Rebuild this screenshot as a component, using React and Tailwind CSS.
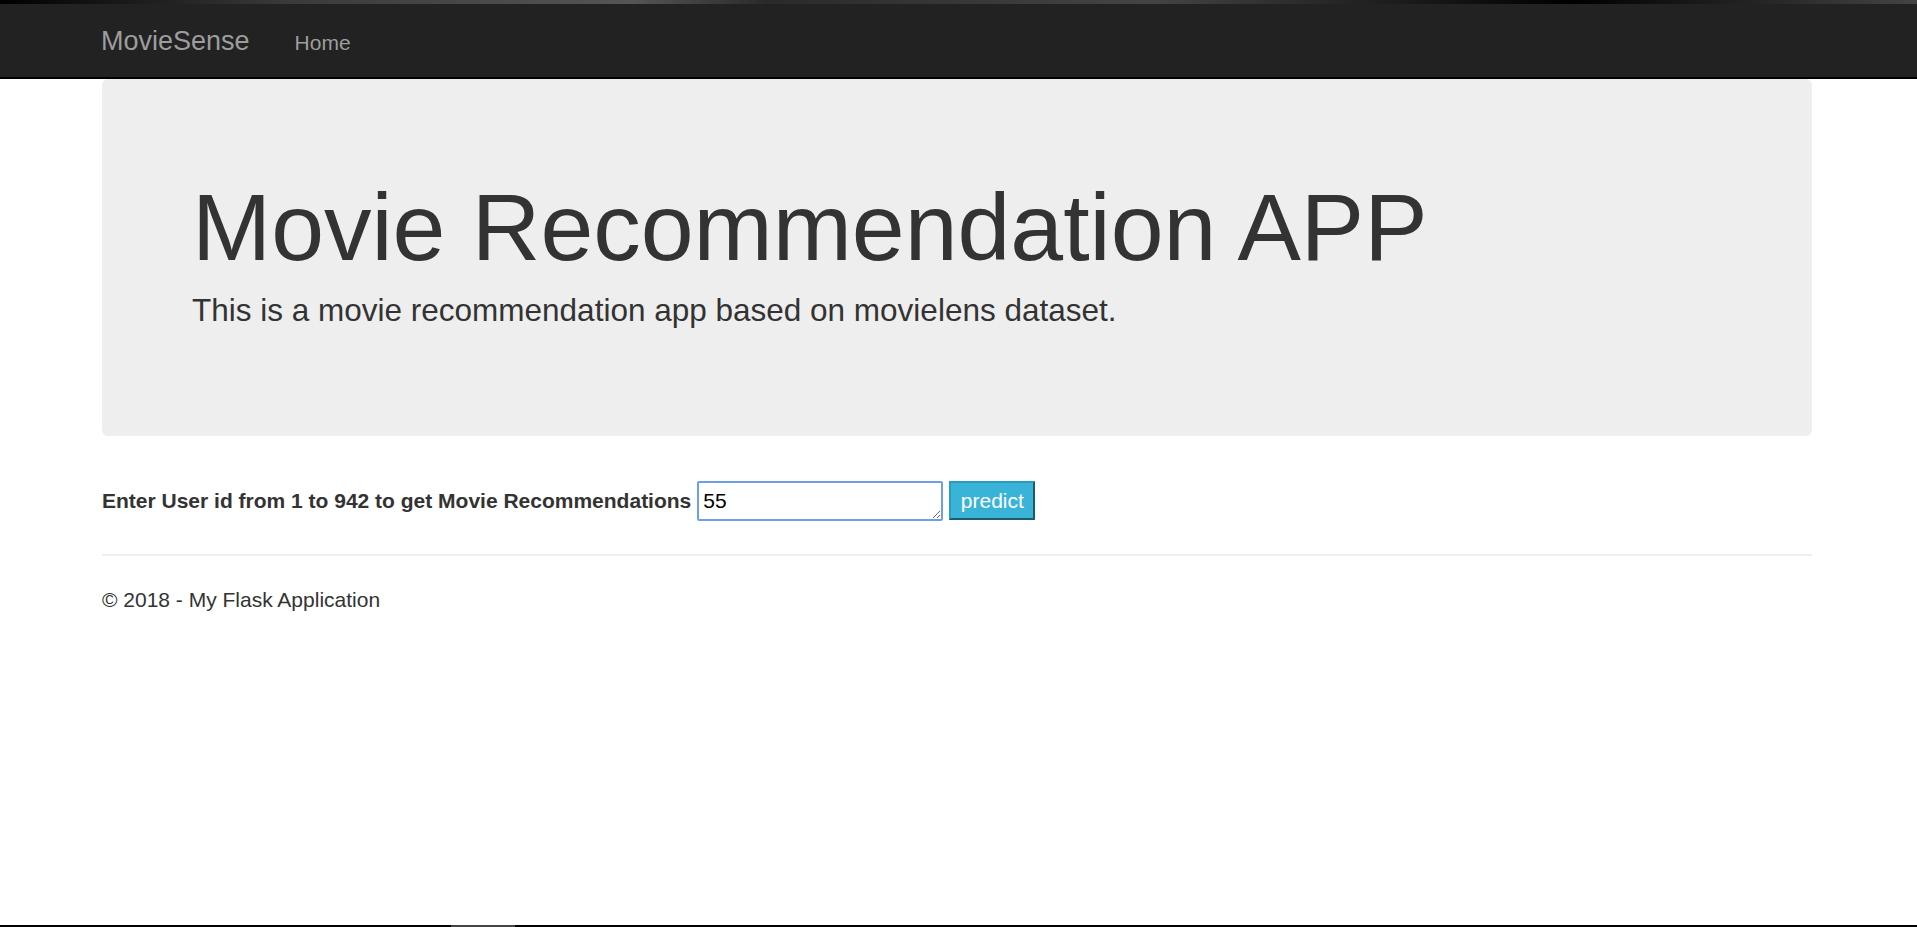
// MovieSense — movie recommendation landing page
const FONT = { fontFamily: '"Liberation Sans", Arial, Helvetica, sans-serif' }

function Navbar() {
  return (
    <div>
      <div className="h-[4px] bg-[linear-gradient(90deg,#000_0%,#3a3a3a_15%,#555_33%,#2a2a2a_40%,#444_60%,#000_82%,#444_100%)]" />
      <nav className="h-[75px] bg-[#222] border-b-2 border-black">
        <div className="ml-[101px] flex items-baseline h-full">
          <a className="text-[27px] text-[#9d9d9d] leading-[75px]">MovieSense</a>
          <a className="ml-[45px] text-[21px] text-[#9d9d9d] leading-[73px]">Home</a>
        </div>
      </nav>
    </div>
  )
}

function Jumbotron() {
  return (
    <div className="bg-[#eee] rounded-[6px] px-[90px] pt-[96px] pb-[103px]">
      <h1 className="text-[95px] leading-[1.1] text-[#333] m-0">Movie Recommendation APP</h1>
      <p className="text-[31.5px] leading-[45px] text-[#333] mt-[8px]">
        This is a movie recommendation app based on movielens dataset.
      </p>
    </div>
  )
}

function PredictForm() {
  return (
    <form className="flex items-center mt-[45px]" onSubmit={e => e.preventDefault()}>
      <label className="text-[21px] font-bold text-[#333]">
        Enter User id from 1 to 942 to get Movie Recommendations
      </label>
      <textarea
        defaultValue="55"
        rows={1}
        className="ml-[6px] w-[246px] h-[40px] border-2 border-[#6d9eeb] rounded-[2px] bg-white text-[21px] leading-[24px] text-black px-[4px] pt-[6px] outline-none"
      />
      <button
        type="submit"
        className="ml-[6px] w-[86px] h-[39px] bg-[#39b3d7] text-white text-[21px] border-2 border-t-[#2a9cc0] border-l-[#2a9cc0] border-b-[#1a5c6e] border-r-[#1a5c6e]"
      >
        predict
      </button>
    </form>
  )
}

export default function App() {
  return (
    <div className="h-[927px] flex flex-col bg-white text-[#333]" style={FONT}>
      <Navbar />
      <div className="ml-[102px] w-[1710px]">
        <Jumbotron />
        <PredictForm />
        <hr className="mt-[33px] border-t-2 border-[#eee]" />
        <footer className="mt-[29px] text-[21px] leading-[30px] text-[#333]">© 2018 - My Flask Application</footer>
      </div>
      <div className="flex-1" />
      <div className="h-[2px] flex bg-black">
        <div className="ml-[451px] w-[64px] bg-[#444]" />
      </div>
    </div>
  )
}
